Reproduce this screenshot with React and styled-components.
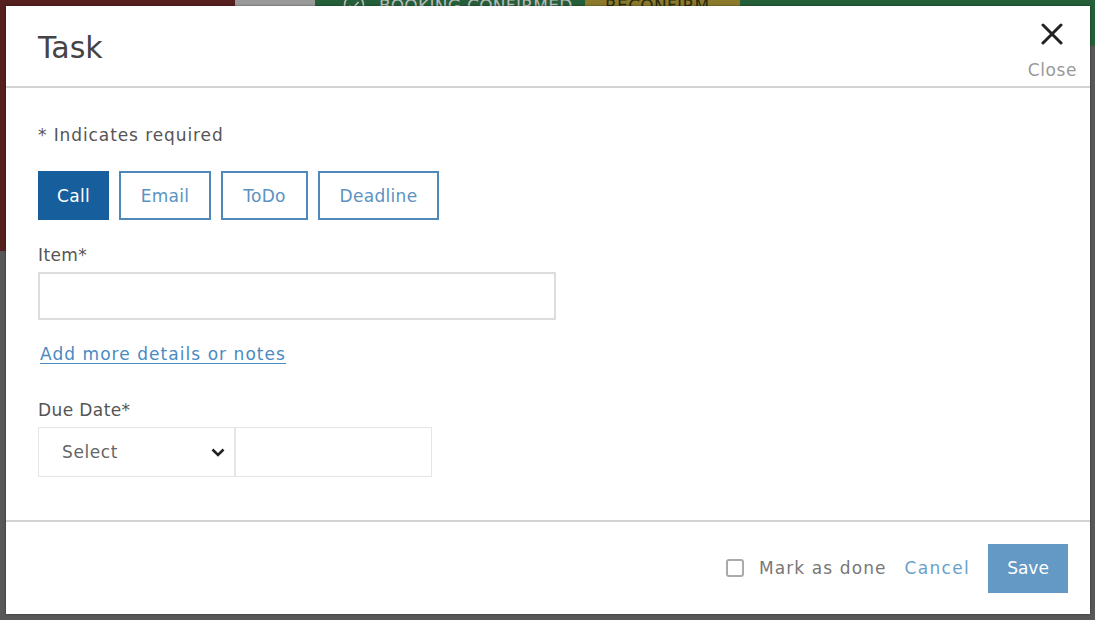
import { useState } from "react";
import styled, { createGlobalStyle } from "styled-components";

const GlobalStyle = createGlobalStyle`
  html, body {
    margin: 0;
    padding: 0;
    width: 1095px;
    height: 620px;
    overflow: hidden;
    font-family: "DejaVu Sans", "Open Sans", sans-serif;
  }
  * { box-sizing: border-box; }
`;

const Page = styled.div`
  position: relative;
  width: 1095px;
  height: 620px;
  background: #585858;
  overflow: hidden;
`;

const TopBar = styled.div`
  display: flex;
  height: 46px;
`;

const Segment = styled.div`
  width: ${(p) => p.w || "auto"};
  flex: ${(p) => (p.w ? "none" : 1)};
  background: ${(p) => p.bg};
  color: ${(p) => p.fg || "#bbb"};
  display: flex;
  align-items: flex-end;
  gap: 14px;
  padding: 0 0 30px ${(p) => p.pl || 20}px;
  white-space: nowrap;
  overflow: hidden;
  font-size: 17px;
  line-height: 20px;
  letter-spacing: 0.3px;
`;

const Sidebar = styled.div`
  width: 235px;
  height: 205px;
  background: #56201f;
`;

const Modal = styled.div`
  position: absolute;
  top: 6px;
  left: 6px;
  width: 1084px;
  height: 608px;
  background: #fff;
  display: flex;
  flex-direction: column;
  box-shadow: 0 0 2px rgba(0, 0, 0, 0.5);
  line-height: 20px;
`;

const Header = styled.header`
  height: 82px;
  display: flex;
  align-items: flex-start;
  justify-content: space-between;
  padding: 0 13px 0 32px;
  border-bottom: 2px solid #d2d2d2;
`;

const Title = styled.h2`
  margin: 25px 0 0;
  font-size: 30px;
  line-height: 34px;
  font-weight: 400;
  color: #444;
`;

const CloseButton = styled.button`
  border: none;
  background: none;
  padding: 0;
  margin-top: 17px;
  display: flex;
  flex-direction: column;
  align-items: center;
  color: #999;
  font-family: inherit;
  font-size: 17px;
  letter-spacing: 0.6px;
  line-height: 20px;
  cursor: pointer;

  svg {
    margin-bottom: 15px;
  }
`;

const Body = styled.div`
  flex: 1;
  padding: 37px 32px 0;
  border-bottom: 2px solid #d2d2d2;
`;

const Note = styled.p`
  margin: 0 0 26px;
  font-size: 17px;
  letter-spacing: 0.9px;
  color: #555;
`;

const TypeRow = styled.div`
  display: flex;
  gap: 10px;
`;

const TypeButton = styled.button`
  width: ${(p) => p.w}px;
  height: 49px;
  padding: 0;
  font-family: inherit;
  font-size: 17px;
  letter-spacing: 0.3px;
  border: 2px solid ${(p) => (p.active ? "#175e9c" : "#4f88ba")};
  background: ${(p) => (p.active ? "#175e9c" : "#fff")};
  color: ${(p) => (p.active ? "#fff" : "#5b92c2")};
  cursor: pointer;
`;

const Field = styled.div`
  margin-top: ${(p) => p.top}px;
`;

const Label = styled.label`
  display: block;
  font-size: 17px;
  letter-spacing: 0.4px;
  color: #555;
  margin-bottom: 7px;
`;

const TextInput = styled.input`
  display: block;
  width: ${(p) => p.w};
  height: ${(p) => p.h || "48px"};
  border: ${(p) => p.b || "2px solid #ddd"};
  outline: none;
  font-family: inherit;
  font-size: 16px;
  padding: 0 12px;
`;

const DetailsLink = styled.a`
  display: inline-block;
  margin: 24px 0 0 2px;
  font-size: 17px;
  letter-spacing: 1.05px;
  color: #4a8ac3;
  text-decoration: underline;
  text-underline-offset: 3px;
`;

const DateRow = styled.div`
  display: flex;
`;

const SelectBox = styled.div`
  width: 197px;
  height: 50px;
  border: 1px solid #e6e6e6;
  display: flex;
  align-items: center;
  justify-content: space-between;
  padding: 0 8px 0 23px;
  font-size: 17px;
  letter-spacing: 0.6px;
  color: #666;
`;

const Footer = styled.footer`
  height: 92px;
  display: flex;
  align-items: center;
  justify-content: flex-end;
  padding-right: 22px;
`;

const Check = styled.label`
  display: flex;
  align-items: center;
  gap: 15px;
  font-size: 17px;
  letter-spacing: 1.1px;
  color: #777;
  margin-right: 18px;
`;

const Box = styled.span`
  width: 18px;
  height: 18px;
  border: 2px solid #aaa;
  border-radius: 3px;
`;

const CancelLink = styled.a`
  font-size: 17px;
  letter-spacing: 1.3px;
  color: #6a9fcc;
  margin-right: 18px;
`;

const SaveButton = styled.button`
  width: 80px;
  height: 49px;
  border: none;
  background: #6399c4;
  color: #fff;
  font-family: inherit;
  font-size: 17px;
`;

const types = [
  { name: "Call", w: 71 },
  { name: "Email", w: 92 },
  { name: "ToDo", w: 87 },
  { name: "Deadline", w: 121 },
];

export default function App() {
  const [type, setType] = useState("Call");
  return (
    <>
      <GlobalStyle />
      <Page>
        <TopBar>
          <Segment w="235px" bg="#56201f" />
          <Segment w="80px" bg="#9a9a9a" />
          <Segment w="270px" bg="#255f39" pl={28}>
            <svg width="22" height="22" viewBox="0 0 22 22">
              <circle cx="11" cy="11" r="9.5" fill="none" stroke="#bbb" strokeWidth="1.6" />
              <path d="M6.5 11.5 L9.5 14.5 L15.5 8" fill="none" stroke="#bbb" strokeWidth="1.6" />
            </svg>
            BOOKING CONFIRMED
          </Segment>
          <Segment w="155px" bg="#8b7a2c" fg="#2a2a10">RECONFIRM</Segment>
          <Segment bg="#255f39" />
        </TopBar>
        <Sidebar />
        <Modal>
          <Header>
            <Title>Task</Title>
            <CloseButton>
              <svg width="22" height="22" viewBox="0 0 22 22">
                <path d="M2 2 L20 20 M20 2 L2 20" stroke="#222" strokeWidth="3" strokeLinecap="round" />
              </svg>
              Close
            </CloseButton>
          </Header>
          <Body>
            <Note>* Indicates required</Note>
            <TypeRow>
              {types.map((t) => (
                <TypeButton key={t.name} w={t.w} active={t.name === type} onClick={() => setType(t.name)}>
                  {t.name}
                </TypeButton>
              ))}
            </TypeRow>
            <Field top={25}>
              <Label>Item*</Label>
              <TextInput w="518px" />
            </Field>
            <DetailsLink href="#">Add more details or notes</DetailsLink>
            <Field top={35}>
              <Label>Due Date*</Label>
              <DateRow>
                <SelectBox>
                  Select
                  <svg width="16" height="16" viewBox="0 0 16 16">
                    <path d="M2.5 5.5 L8 11 L13.5 5.5" fill="none" stroke="#222" strokeWidth="2.6" />
                  </svg>
                </SelectBox>
                <TextInput w="197px" h="50px" b="1px solid #e6e6e6" />
              </DateRow>
            </Field>
          </Body>
          <Footer>
            <Check>
              <Box />
              Mark as done
            </Check>
            <CancelLink>Cancel</CancelLink>
            <SaveButton>Save</SaveButton>
          </Footer>
        </Modal>
      </Page>
    </>
  );
}
